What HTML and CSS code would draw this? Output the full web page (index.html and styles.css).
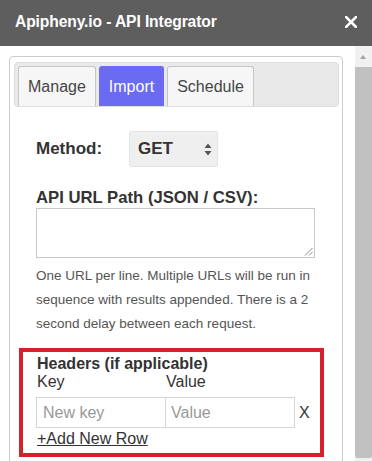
FILE: index.html
```html
<!DOCTYPE html>
<html>
<head>
<meta charset="utf-8">
<link rel="stylesheet" href="styles.css">
</head>
<body>
<div class="titlebar">
  <span class="title">Apipheny.io - API Integrator</span>
  <svg class="close" width="12" height="12" viewBox="0 0 12 12"><path d="M1 1L11 11M11 1L1 11" stroke="#fff" stroke-width="2.6" stroke-linecap="square"/></svg>
</div>
<div class="main">
  <div class="content">
    <div class="card">
      <div class="tabs">
        <div class="tab">Manage</div>
        <div class="tab active">Import</div>
        <div class="tab">Schedule</div>
      </div>
      <div class="panel">
        <div class="method-row">
          <span class="label">Method:</span>
          <div class="select">
            <span>GET</span>
            <svg class="updown" width="8" height="13" viewBox="0 0 8 13"><path d="M4 0.5L7.5 5H0.5Z M4 12.5L7.5 8H0.5Z" fill="#555"/></svg>
          </div>
        </div>
        <div class="label url-label">API URL Path (JSON / CSV):</div>
        <div class="textarea">
          <svg class="grip" width="9" height="9" viewBox="0 0 9 9"><path d="M8.5 1L1 8.5M8.5 5L5 8.5" stroke="#888" stroke-width="1"/></svg>
        </div>
        <p class="help">One URL per line. Multiple URLs will be run in sequence with results appended. There is a 2 second delay between each request.</p>
        <div class="annot">
          <div class="hdr-title">Headers (if applicable)</div>
          <div class="kv-head"><span class="col-key">Key</span><span>Value</span></div>
          <div class="kv-row">
            <div class="input key">New key</div>
            <div class="input val">Value</div>
            <span class="remove">X</span>
          </div>
          <a class="add-row">+Add New Row</a>
        </div>
      </div>
    </div>
  </div>
  <div class="scrollbar">
    <div class="sb-arrow"></div>
    <div class="sb-thumb"></div>
  </div>
</div>
</body>
</html>
```

FILE: styles.css
```css
html, body {
  margin: 0;
  padding: 0;
}
body {
  width: 372px;
  height: 461px;
  overflow: hidden;
  background: #fff;
  font-family: "Liberation Sans", Arial, sans-serif;
  color: #333;
}
.titlebar {
  height: 46px;
  background: #5e5e5e;
  display: flex;
  align-items: center;
  justify-content: space-between;
  padding: 0 15px 0 15px;
  box-sizing: border-box;
}
.title {
  color: #fff;
  font-weight: bold;
  font-size: 15.6px;
  letter-spacing: -0.1px;
  margin-top: -2px;
}
.close {
  display: block;
  margin-top: -2px;
}
.main {
  display: flex;
  height: 415px;
}
.content {
  flex: 1;
  padding: 10px 12px 0 9px;
  overflow: hidden;
}
.card {
  border: 1px solid #cbcbcb;
  border-radius: 4px;
  padding: 5px 3px 0 4px;
  height: 500px;
}
.tabs {
  display: flex;
  gap: 3px;
  background: #e9e9e9;
  border: 1px solid #dddddd;
  border-radius: 4px;
  padding: 3px 3px 0 3px;
  height: 40px;
}
.tab {
  height: 40px;
  line-height: 40px;
  box-sizing: border-box;
  padding: 0 9px;
  border: 1px solid #c5c5c5;
  border-bottom: 0;
  border-radius: 3px 3px 0 0;
  background: #f6f6f6;
  font-size: 16px;
  color: #454545;
}
.tab.active {
  background: #6a6af2;
  border-color: #6a6af2;
  color: #fff;
}
.panel {
  padding: 0 22px;
}
.label {
  font-weight: bold;
  font-size: 17px;
  color: #333;
}
.method-row {
  display: flex;
  align-items: center;
  margin-top: 24px;
  height: 36px;
}
.method-row .label {
  width: 93px;
}
.select {
  width: 89px;
  height: 36px;
  box-sizing: border-box;
  border: 1px solid #e4e4e4;
  border-radius: 2px;
  background: #efefef;
  display: flex;
  align-items: center;
  justify-content: space-between;
  padding: 0 5px 0 8px;
  font-weight: bold;
  font-size: 17px;
  color: #333;
}
.updown {
  display: block;
}
.url-label {
  margin-top: 21px;
  line-height: 20px;
  font-size: 16.7px;
}
.textarea {
  margin-top: 0;
  height: 50px;
  border: 1px solid #c8c8c8;
  box-sizing: border-box;
  position: relative;
  width: 279px;
}
.grip {
  position: absolute;
  right: 1px;
  bottom: 1px;
}
.help {
  margin: 6px 0 0 0;
  font-size: 13.5px;
  line-height: 24px;
  color: #555;
}
.annot {
  margin: 12px -7px 0 -17px;
  border: 4px solid #d8202b;
  padding: 3px 10px 5px 14px;
  font-size: 16px;
  line-height: 18px;
}
.hdr-title {
  font-weight: bold;
  color: #333;
}
.kv-head {
  display: flex;
  color: #333;
}
.col-key {
  width: 129px;
}
.kv-row {
  display: flex;
  align-items: center;
  margin-top: 6px;
  margin-left: -1px;
}
.input {
  height: 31px;
  box-sizing: border-box;
  border: 1px solid #d6d6d6;
  color: #999;
  line-height: 29px;
  padding-left: 6px;
}
.input.key {
  width: 130px;
}
.input.val {
  width: 130px;
  margin-left: -1px;
  padding-left: 5px;
}
.remove {
  margin-left: 4px;
  color: #333;
}
.add-row {
  display: block;
  margin-top: 2px;
  color: #333;
  text-decoration: underline;
}
.scrollbar {
  width: 17px;
  background: #f1f1f1;
  display: flex;
  flex-direction: column;
}
.sb-arrow {
  height: 21px;
  position: relative;
}
.sb-arrow::after {
  content: "";
  position: absolute;
  left: 5px;
  top: 9px;
  border-left: 3.5px solid transparent;
  border-right: 3.5px solid transparent;
  border-bottom: 4px solid #a3a3a3;
}
.sb-thumb {
  height: 391px;
  background: #c1c1c1;
  border-radius: 0 0 2px 2px;
}
```
